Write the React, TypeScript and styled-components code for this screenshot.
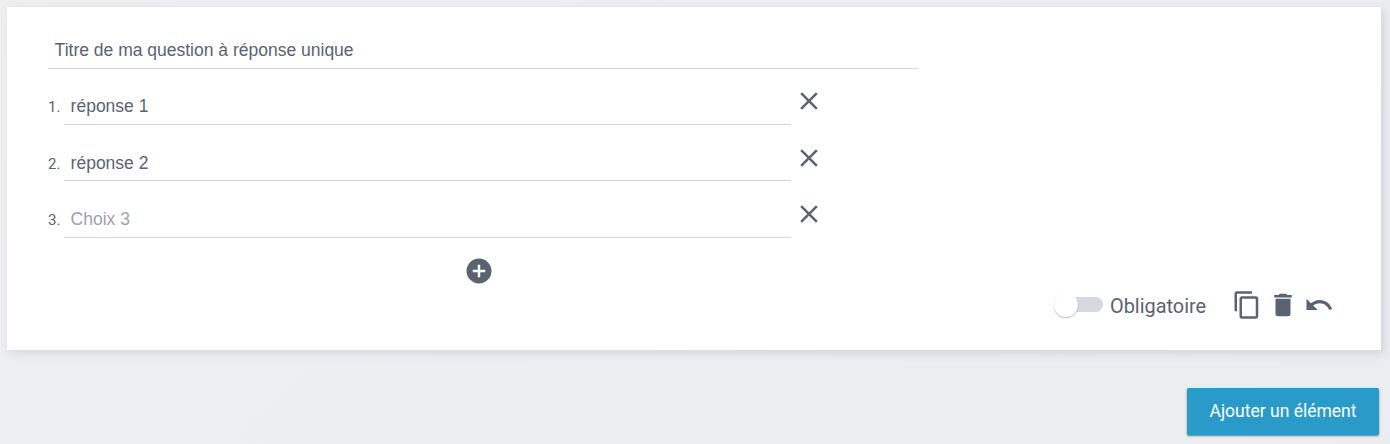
import React, { useState } from "react";
import styled, { createGlobalStyle } from "styled-components";

const GlobalStyle = createGlobalStyle`
  * { box-sizing: border-box; }
  body {
    margin: 0;
    min-height: 444px;
    overflow: hidden;
    color: #5a6372;
    font-family: Roboto, "Liberation Sans", sans-serif;
    background: linear-gradient(135deg, #efefef 0%, #eeeff2 30%, #ebecf0 100%);
  }
`;

const Page = styled.main`
  height: 444px;
  padding: 7px 9px 0 7px;
  display: flex;
  flex-direction: column;
`;

const Card = styled.section`
  height: 343px;
  flex: none;
  padding: 25px 47.4px 0 41px;
  background: #fff;
  box-shadow: 3px 3px 9px rgba(90, 99, 114, 0.18);
`;

const Field = styled.input<{ $height: number; $width: number }>`
  display: block;
  width: ${(p) => p.$width}px;
  height: ${(p) => p.$height}px;
  padding: 0 6.6px;
  border: 0;
  border-bottom: 1px solid #d5d7e0;
  outline: 0;
  background: transparent;
  color: #5a6372;
  font: 17.5px "Liberation Sans", Arial, sans-serif;
  &::placeholder {
    color: #9ea2ac;
    opacity: 1;
  }
`;

const Choices = styled.div`
  width: 870px;
  height: 169px;
  display: grid;
  grid-template-rows: 56px 56px 57px;
`;

const ChoiceRow = styled.div<{ $shift: number }>`
  display: flex;
  align-items: flex-end;
  padding-top: ${(p) => p.$shift}px;
`;

const Index = styled.span`
  align-self: flex-start;
  width: 16px;
  padding-top: 28px;
  font-size: 15px;
  line-height: 20px;
`;

const RemoveButton = styled.button`
  align-self: flex-start;
  display: flex;
  width: 30px;
  height: 30px;
  margin: 17px 0 0 3.3px;
  padding: 0;
  border: 0;
  background: none;
  color: inherit;
`;

const AddRow = styled.div`
  display: flex;
  width: 862px;
  height: 52px;
  padding-top: 17.6px;
  justify-content: center;
`;

const Actions = styled.div`
  display: flex;
  align-items: center;
  justify-content: flex-end;
  height: 30px;
`;

const Switch = styled.span`
  display: flex;
  align-items: center;
  width: 47px;
  height: 15px;
  margin: -1px 7px 0 0;
  border-radius: 8px;
  background: linear-gradient(90deg, transparent 12px, #d5d8e0 12px);
`;

const Knob = styled.span`
  width: 24px;
  height: 24px;
  flex: none;
  margin-left: -2px;
  border-radius: 50%;
  background: #fff;
  box-shadow: 0 1px 1.5px rgba(0, 0, 0, 0.27);
`;

const SwitchLabel = styled.span`
  font-size: 19.9px;
  line-height: 30px;
  padding-top: 4px;
  margin-right: 25.5px;
`;

const Tools = styled.div`
  display: flex;
  gap: 6px;
`;

const Glyph = styled.svg`
  display: block;
  width: 30px;
  height: 30px;
  fill: currentColor;
`;

const Footer = styled.footer`
  display: flex;
  justify-content: flex-end;
  padding: 38px 2px 0 0;
`;

const AddElement = styled.button`
  width: 192px;
  height: 47px;
  padding: 0 0 2px;
  border: 0;
  border-radius: 2px;
  background: #2a9bc8;
  color: #fff;
  font: 400 17.5px Roboto, sans-serif;
  box-shadow: 0 1px 2px rgba(0, 0, 0, 0.5);
`;

const icons = {
  close:
    "M19,6.41L17.59,5L12,10.59L6.41,5L5,6.41L10.59,12L5,17.59L6.41,19L12,13.41L17.59,19L19,17.59L13.41,12L19,6.41Z",
  plus: "M17,13H13V17H11V13H7V11H11V7H13V11H17M12,2A10,10 0 0,0 2,12A10,10 0 0,0 12,22A10,10 0 0,0 22,12A10,10 0 0,0 12,2Z",
  copy: "M19,21H8V7H19M19,5H8A2,2 0 0,0 6,7V21A2,2 0 0,0 8,23H19A2,2 0 0,0 21,21V7A2,2 0 0,0 19,5M16,1H4A2,2 0 0,0 2,3V17H4V3H16V1Z",
  trash:
    "M19,4H15.5L14.5,3H9.5L8.5,4H5V6H19M6,19A2,2 0 0,0 8,21H16A2,2 0 0,0 18,19V7H6V19Z",
  undo: "M12.5,8C9.85,8 7.45,9 5.6,10.6L2,7V16H11L7.38,12.38C8.77,11.22 10.54,10.5 12.5,10.5C16.04,10.5 19.08,12.81 20.14,16L22.51,15.22C21.12,11.03 17.15,8 12.5,8Z",
};

const Icon = ({ name }: { name: keyof typeof icons }) => (
  <Glyph viewBox="0 0 24 24" aria-hidden="true">
    <path d={icons[name]} />
  </Glyph>
);

export default function App() {
  const [title, setTitle] = useState("Titre de ma question à réponse unique");
  const [choices, setChoices] = useState(["réponse 1", "réponse 2", ""]);

  return (
    <>
      <GlobalStyle />
      <Page>
        <Card>
          <Field $width={870} $height={37} value={title} onChange={(e) => setTitle(e.target.value)} />
          <Choices>
            {choices.map((choice, i) => (
              <ChoiceRow key={i} $shift={i === 0 ? 0 : 1}>
                <Index>{i + 1}.</Index>
                <Field
                  $width={727}
                  $height={i === 1 ? 35 : 37}
                  value={choice}
                  placeholder={`Choix ${i + 1}`}
                  onChange={(e) =>
                    setChoices(choices.map((c, n) => (n === i ? e.target.value : c)))
                  }
                />
                <RemoveButton aria-label="Supprimer">
                  <Icon name="close" />
                </RemoveButton>
              </ChoiceRow>
            ))}
          </Choices>
          <AddRow>
            <Icon name="plus" />
          </AddRow>
          <Actions>
            <Switch>
              <Knob />
            </Switch>
            <SwitchLabel>Obligatoire</SwitchLabel>
            <Tools>
              <Icon name="copy" />
              <Icon name="trash" />
              <Icon name="undo" />
            </Tools>
          </Actions>
        </Card>
        <Footer>
          <AddElement>Ajouter un élément</AddElement>
        </Footer>
      </Page>
    </>
  );
}
